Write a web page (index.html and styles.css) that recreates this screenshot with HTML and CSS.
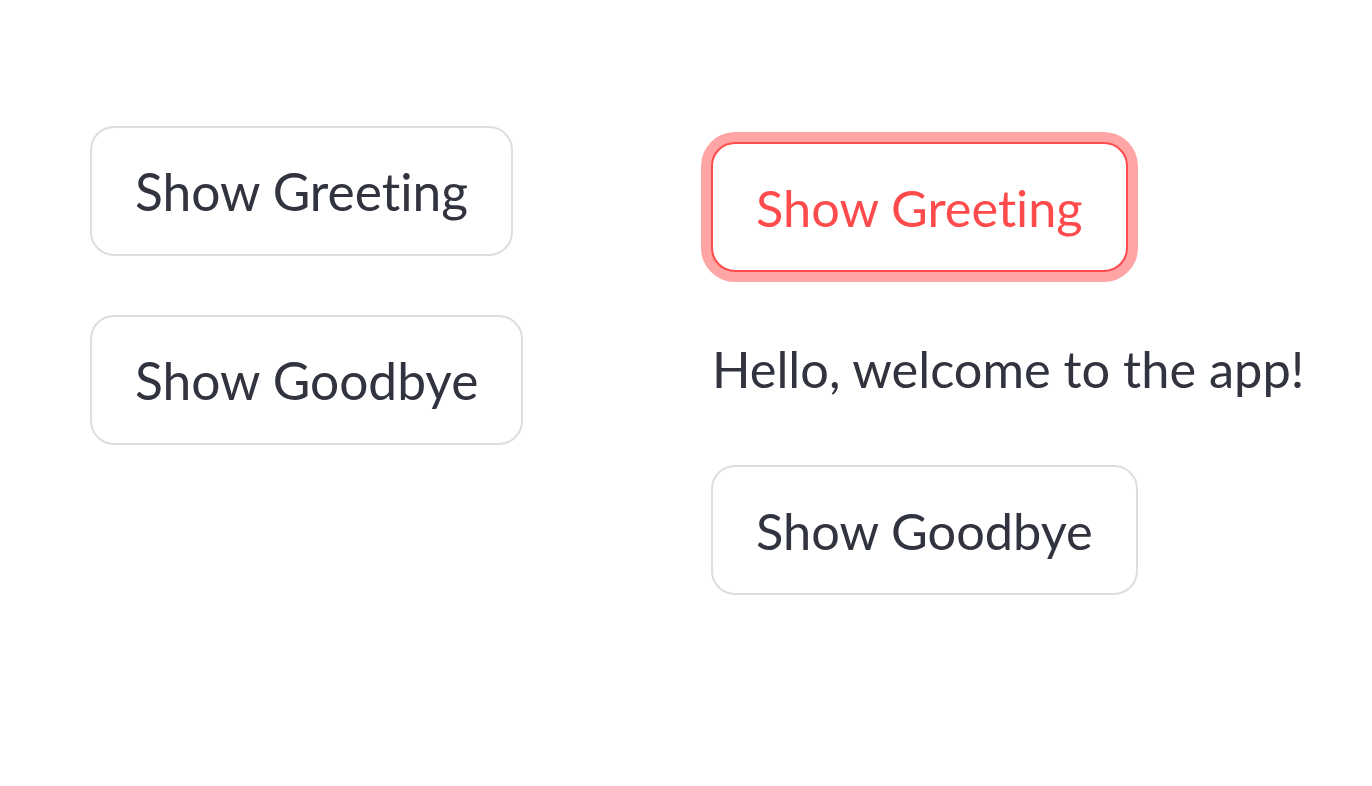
FILE: index.html
```html
<!DOCTYPE html>
<html>
<head>
	<meta charset="utf-8">
	<title>Greeting app</title>
	<link rel="stylesheet" href="styles.css">
</head>
<body>
	<div id="main">
		<div class="col col-left">
			<button class="btn">Show Greeting</button>
			<button class="btn">Show Goodbye</button>
		</div>
		<div class="col col-right">
			<button class="btn btn-focus">Show Greeting</button>
			<p class="msg">Hello, welcome to the app!</p>
			<button class="btn">Show Goodbye</button>
		</div>
	</div>
</body>
</html>
```

FILE: styles.css
```css
body
{
	margin: 0;
	background: #fff;
	font-family: Lato, "Open Sans", sans-serif;
	font-variant-ligatures: none;
	color: #31333f;
}
#main
{
	display: grid;
	grid-template-columns: 621px 1fr;
	padding: 126px 0 0 90px;
}
.col
{
	display: flex;
	flex-direction: column;
	align-items: flex-start;
}
.col-left
{
	gap: 59px;
	font-size: 51.5px;
}
.col-right
{
	padding-top: 16px;
	font-size: 50.5px;
}
.btn
{
	height: 130px;
	padding: 0 43px;
	box-sizing: border-box;
	background: #fff;
	border: 2px solid #dedee0;
	border-radius: 24px;
	font-family: inherit;
	font-size: inherit;
	font-variant-ligatures: none;
	color: #31333f;
	cursor: pointer;
	outline: none;
}
.btn-focus
{
	border-color: #ff4b4b;
	color: #ff4b4b;
	box-shadow: 0 0 0 10px rgba(255, 75, 75, 0.5);
}
.msg
{
	margin: 62px 0 61px 1px;
	line-height: 70px;
}
```
